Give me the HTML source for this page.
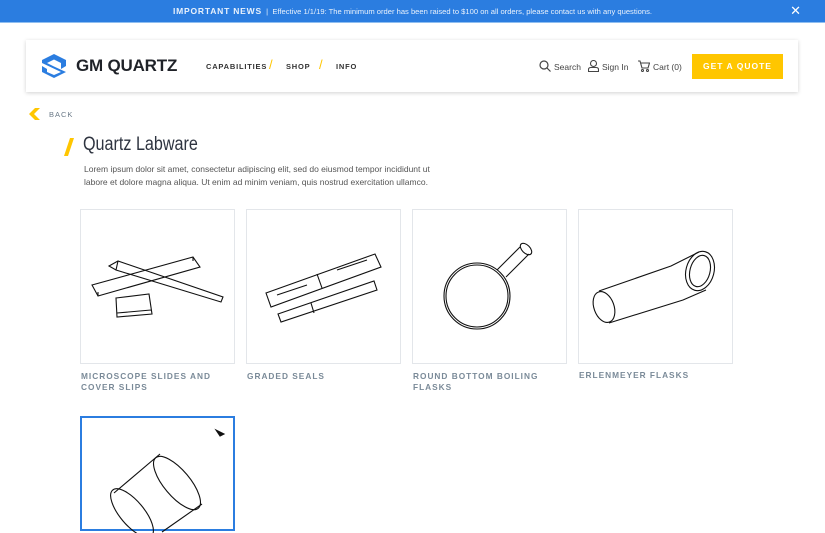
<!DOCTYPE html>
<html><head><meta charset="utf-8"><style>
*{margin:0;padding:0;box-sizing:border-box}
body{width:825px;height:525px;overflow:hidden;background:#fff;font-family:"Liberation Sans",sans-serif;position:relative;color:#333}
.bar{position:absolute;left:0;top:0;width:825px;height:23px;background:#2b7de0;border-bottom:1px solid #8fbef0;color:#e8f1fc;font-size:7.6px;line-height:22px;text-align:center}
.bar b{letter-spacing:.8px;font-size:8.5px}
.x{position:absolute;right:24px;top:0;font-size:13px;color:#fff}
.hdr{position:absolute;left:26px;top:40px;width:772px;height:52px;background:#fff;box-shadow:0 1px 4px rgba(0,0,0,.18)}
.logo{position:absolute;left:14px;top:13px}
.brand{position:absolute;left:50px;top:16px;font-size:17px;font-weight:bold;color:#1f2228;letter-spacing:-.2px}
.nav{position:absolute;top:22px;font-size:7.5px;letter-spacing:.8px;color:#333;font-weight:bold}
.sl{position:absolute;top:17px;color:#ffc600;font-size:13px}
.r{position:absolute;top:22px;font-size:8.5px;color:#444}
.btn{position:absolute;left:666px;top:14px;width:91px;height:25px;background:#ffc600;color:#fff;font-size:8.5px;font-weight:bold;letter-spacing:1px;text-align:center;line-height:25px}
.back{position:absolute;left:49px;top:110px;font-size:7.5px;letter-spacing:1px;color:#6b7a88}
h1{position:absolute;left:83px;top:134px;font-family:"Liberation Sans Narrow","Liberation Sans",sans-serif;font-weight:normal;font-size:19px;color:#2e3440;transform:scaleX(.85);transform-origin:left}
.p{position:absolute;left:84px;top:163px;width:350px;font-size:8.5px;line-height:13px;color:#555}
.card{position:absolute;width:155px;height:155px;border:1px solid #e3e6ea}
.lbl{position:absolute;font-size:8.3px;letter-spacing:1px;color:#7a8a98;font-weight:bold;line-height:11px;width:150px}
svg.i{position:absolute;left:0;top:0}
</style></head><body>
<div class="bar"><b>IMPORTANT NEWS</b> &nbsp;|&nbsp; Effective 1/1/19: The minimum order has been raised to $100 on all orders, please contact us with any questions.<span class="x">✕</span></div>
<div class="hdr">
<svg class="logo" width="28" height="26" viewBox="0 0 28 26"><path d="M14 1 L26 7 V13 L21 16 V10 L14 6.5 L7 10 L14 13.5 L26 19 L14 25 L2 19 V13 L7 16 V19 L14 22 L21 19 L2 10 V7 Z" fill="#2b7de0"/></svg>
<div class="brand">GM QUARTZ</div>
<div class="nav" style="left:180px">CAPABILITIES</div><div class="sl" style="left:243px">/</div>
<div class="nav" style="left:260px">SHOP</div><div class="sl" style="left:293px">/</div>
<div class="nav" style="left:310px">INFO</div>
<svg style="position:absolute;left:513px;top:20px" width="12" height="12" viewBox="0 0 12 12" fill="none" stroke="#444" stroke-width="1.2"><circle cx="5" cy="5" r="4"/><path d="M8 8l3.5 3.5"/></svg>
<div class="r" style="left:528px">Search</div>
<svg style="position:absolute;left:562px;top:20px" width="11" height="12" viewBox="0 0 11 12" fill="none" stroke="#444" stroke-width="1.1"><circle cx="5.5" cy="3.5" r="3"/><path d="M.5 11.5V9.5Q.5 7.5 3 7.5H8Q10.5 7.5 10.5 9.5V11.5Z"/></svg>
<div class="r" style="left:576px">Sign In</div>
<svg style="position:absolute;left:612px;top:20px" width="12" height="12" viewBox="0 0 12 12" fill="none" stroke="#444" stroke-width="1.1"><path d="M0 1H2L4 8H10L11.5 3H3"/><circle cx="4.5" cy="10.5" r="1"/><circle cx="9.5" cy="10.5" r="1"/></svg>
<div class="r" style="left:627px">Cart (0)</div>
<div class="btn">GET A QUOTE</div>
</div>
<svg style="position:absolute;left:29px;top:108px" width="12" height="12" viewBox="0 0 12 12"><path d="M11 0H6L0 6L6 12H11L5 6Z" fill="#ffc600"/></svg>
<div class="back">BACK</div>
<svg style="position:absolute;left:63px;top:137px" width="12" height="20"><path d="M7 1H11L5 19H1Z" fill="#ffc600"/></svg>
<h1>Quartz Labware</h1>
<div class="p">Lorem ipsum dolor sit amet, consectetur adipiscing elit, sed do eiusmod tempor incididunt ut labore et dolore magna aliqua. Ut enim ad minim veniam, quis nostrud exercitation ullamco.</div>

<div class="card" style="left:80px;top:209px"><svg class="i" width="155" height="155" fill="none" stroke="#111" stroke-width="1.1"><path d="M11 75L112 47L119 57L17 86Z M17 86L17 82M112 47V51"/><path d="M28 56L37 51L142 87L140 92L35 60Z M35 60L37 51"/><path d="M35 88L68 84L71 104L36 107Z M36 103L70 100"/></svg></div>
<div class="lbl" style="left:81px;top:371px">MICROSCOPE SLIDES AND COVER SLIPS</div>

<div class="card" style="left:246px;top:209px"><svg class="i" width="155" height="155" fill="none" stroke="#111" stroke-width="1.1"><path d="M19 83L128 44L134 57L24 97Z M70 64L75 78"/><path d="M31 104L127 71L130 80L34 112Z M64 93L67 103"/><path d="M30 85L60 75M90 60L120 50"/></svg></div>
<div class="lbl" style="left:247px;top:371px">GRADED SEALS</div>

<div class="card" style="left:412px;top:209px"><svg class="i" width="155" height="155" fill="none" stroke="#111" stroke-width="1.1"><circle cx="64" cy="86" r="33"/><circle cx="64" cy="86" r="31"/><path d="M84 60L107 37M93 67L116 44"/><ellipse cx="113" cy="39" rx="7" ry="4" transform="rotate(45 113 39)"/></svg></div>
<div class="lbl" style="left:413px;top:371px">ROUND BOTTOM BOILING FLASKS</div>

<div class="card" style="left:578px;top:209px"><svg class="i" width="155" height="155" fill="none" stroke="#111" stroke-width="1.1"><ellipse cx="25" cy="97" rx="10" ry="16" transform="rotate(-20 25 97)"/><path d="M20 81L92 56L120 42M30 113L104 90L127 80"/><ellipse cx="121" cy="61" rx="14" ry="20" transform="rotate(15 121 61)"/><ellipse cx="121" cy="61" rx="10" ry="16" transform="rotate(15 121 61)"/></svg></div>
<div class="lbl" style="left:579px;top:370px">ERLENMEYER FLASKS</div>

<div class="card" style="left:80px;top:416px;border:2px solid #2b7de0;height:115px"><svg class="i" width="155" height="115" fill="none" stroke="#111" stroke-width="1.1"><ellipse cx="95" cy="65" rx="13" ry="33" transform="rotate(-40 95 65)"/><path d="M78 36L32 75M120 86L80 114"/><ellipse cx="50" cy="95" rx="12" ry="30" transform="rotate(-40 50 95)"/><path d="M138 18L134 12L142 16Z" fill="#111"/></svg></div>
</body></html>
